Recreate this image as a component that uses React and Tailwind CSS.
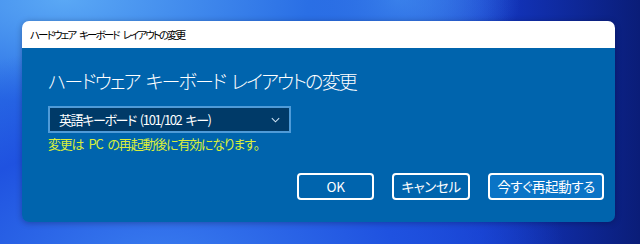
import React from "react";

const jp = "font-['Noto_Sans_CJK_JP','Noto_Sans',sans-serif] [font-feature-settings:'palt']";

// words separated by a fixed gap, since the condensed tracking swallows plain spaces
const Words = ({ text, gap }) => (
  <span className={`inline-flex ${gap}`}>
    {text.split(" ").map((w, i) => (
      <span key={i}>{w}</span>
    ))}
  </span>
);

const Chevron = () => (
  <svg width="11" height="11" viewBox="0 0 12 12" fill="none" stroke="#cfe3f5" strokeWidth="1.1">
    <path d="M2 4.5 L6 8.5 L10 4.5" />
  </svg>
);

const Btn = ({ children, primary, w }) => (
  <button
    className={`h-[27px] ${w} rounded-[4px] border-2 border-white text-white text-[13.5px] tracking-[-0.4px] ${
      primary ? "bg-[#0a74c6]" : "bg-[#0064ad]"
    }`}
  >
    {children}
  </button>
);

export default function App() {
  return (
    <div
      className={`w-[640px] h-[244px] overflow-hidden pt-[21px] pl-[22px] ${jp} bg-[radial-gradient(ellipse_at_25%_110%,#3a7ef0_0%,#1f52e0_35%,transparent_60%),radial-gradient(ellipse_at_10%_0%,#5aa8f5_0%,#2a6fe5_30%,transparent_55%),radial-gradient(ellipse_at_62%_0%,#4b95f2_0%,transparent_22%),linear-gradient(90deg,#2b6de6_0%,#1d4fdc_45%,#1438c8_75%,#0a1d78_100%)]`}
    >
      <div className="w-[593px] rounded-[7px] overflow-hidden shadow-[0_1px_6px_rgba(0,0,20,0.3)]">
        {/* title bar */}
        <div className="h-[27px] bg-white flex items-center pl-[8px] text-[10.5px] tracking-[-1.9px] text-black">
          <Words text="ハードウェア キーボード レイアウトの変更" gap="gap-[4px]" />
        </div>
        {/* body */}
        <div className="h-[174px] bg-[#0064ad] pl-[26px] pr-[11px] pt-[19px] flex flex-col">
          <h1 className="text-[19px] leading-[28px] text-white font-light tracking-[-1.8px]">
            <Words text="ハードウェア キーボード レイアウトの変更" gap="gap-[6px]" />
          </h1>
          <div className="mt-[11px] w-[243px] h-[27px] bg-[#003a68] border-2 border-[#4f9bd8] flex items-center justify-between pl-[9px] pr-[8px]">
            <span className="text-[13px] tracking-[-1.4px] text-white">
              <Words text="英語キーボード (101/102 キー)" gap="gap-[4px]" />
            </span>
            <Chevron />
          </div>
          <p className="mt-[2px] text-[13px] leading-[18px] tracking-[-1.2px] text-[#d9ee3a]">
            <Words text="変更は PC の再起動後に有効になります。" gap="gap-[5px]" />
          </p>
          <div className="mt-auto mb-[22px] flex justify-end gap-[18px]">
            <Btn w="w-[77px]">OK</Btn>
            <Btn w="w-[78px]">キャンセル</Btn>
            <Btn w="w-[116px]" primary>今すぐ再起動する</Btn>
          </div>
        </div>
      </div>
    </div>
  );
}
